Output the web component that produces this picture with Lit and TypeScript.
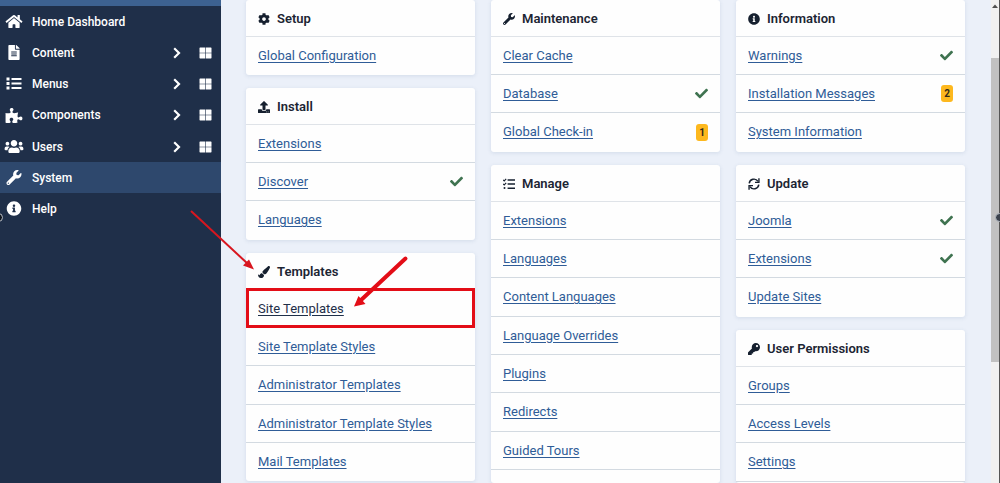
import { LitElement, html, svg, css, nothing } from "lit";
import { customElement, property } from "lit/decorators.js";
import { classMap } from "lit/directives/class-map.js";

const glyph = (d: string) => svg`<path fill="currentColor" d=${d}/>`;

const WRENCH = "M507.73 109.1c-2.24-9.03-13.54-12.09-20.12-5.51l-74.36 74.36-67.88-11.31-11.31-67.88 74.36-74.36c6.62-6.62 3.43-17.9-5.66-20.16-47.38-11.74-99.55.91-136.58 37.93-39.64 39.64-50.55 97.1-34.05 147.2L18.74 402.76c-24.99 24.99-24.99 65.51 0 90.5 24.99 24.99 65.51 24.99 90.5 0l213.21-213.21c50.12 16.71 107.47 5.68 147.37-34.22 37.07-37.07 49.7-89.32 37.91-136.73zM64 472c-13.25 0-24-10.75-24-24 0-13.26 10.75-24 24-24s24 10.74 24 24c0 13.25-10.75 24-24 24z";
const INFO = "M256 8C119.043 8 8 119.083 8 256c0 136.997 111.043 248 248 248s248-111.003 248-248C504 119.083 392.957 8 256 8zm0 110c23.196 0 42 18.804 42 42s-18.804 42-42 42-42-18.804-42-42 18.804-42 42-42zm56 254c0 6.627-5.373 12-12 12h-88c-6.627 0-12-5.373-12-12v-24c0-6.627 5.373-12 12-12h12v-64h-12c-6.627 0-12-5.373-12-12v-24c0-6.627 5.373-12 12-12h64c6.627 0 12 5.373 12 12v100h12c6.627 0 12 5.373 12 12v24z";

const ICONS: Record<string, { box: string; shape: unknown }> = {
  home: { box: "0 0 576 512", shape: glyph("M280.37 148.26L96 300.11V464a16 16 0 0 0 16 16l112.06-.29a16 16 0 0 0 15.92-16V368a16 16 0 0 1 16-16h64a16 16 0 0 1 16 16v95.64a16 16 0 0 0 16 16.05L464 480a16 16 0 0 0 16-16V300L295.67 148.26a12.19 12.19 0 0 0-15.3 0zM571.6 251.47L488 182.56V44.05a12 12 0 0 0-12-12h-56a12 12 0 0 0-12 12v72.61L318.47 43a48 48 0 0 0-61 0L4.34 251.47a12 12 0 0 0-1.6 16.9l25.5 31A12 12 0 0 0 45.15 301l235.22-193.74a12.19 12.19 0 0 1 15.3 0L530.9 301a12 12 0 0 0 16.9-1.6l25.5-31a12 12 0 0 0-1.7-16.93z") },
  file: { box: "0 0 384 512", shape: glyph("M224 136V0H24C10.7 0 0 10.7 0 24v464c0 13.3 10.7 24 24 24h336c13.3 0 24-10.7 24-24V160H248c-13.2 0-24-10.8-24-24zm64 236c0 6.6-5.4 12-12 12H108c-6.6 0-12-5.4-12-12v-8c0-6.6 5.4-12 12-12h168c6.6 0 12 5.4 12 12v8zm0-64c0 6.6-5.4 12-12 12H108c-6.6 0-12-5.4-12-12v-8c0-6.6 5.4-12 12-12h168c6.6 0 12 5.4 12 12v8zm0-72v8c0 6.6-5.4 12-12 12H108c-6.6 0-12-5.4-12-12v-8c0-6.6 5.4-12 12-12h168c6.6 0 12 5.4 12 12zm96-114.1v6.1H256V0h6.1c6.4 0 12.5 2.5 17 7l97.9 98c4.5 4.5 7 10.6 7 16.9z") },
  list: { box: "-2.5 -1 20 15", shape: glyph("M0 .5h3v3H0zM0 5h3v3H0zM0 9.5h3v3H0zM5 1h10v2H5zM5 5.5h10v2H5zM5 10h10v2H5z") },
  puzzle: { box: "0 0 576 512", shape: glyph("M519.442 288.651c-41.519 0-59.5 31.593-82.058 31.593C377.409 320.244 432 144 432 144s-196.288 80-196.288-3.297c0-35.827 36.288-46.25 36.288-85.985C272 19.216 243.885 0 210.539 0c-34.654 0-66.366 18.891-66.366 56.346 0 41.364 31.711 59.277 31.711 81.75C175.885 207.719 0 166.758 0 166.758v333.237s178.635 41.047 178.635-28.662c0-22.473-40-40.107-40-81.471 0-37.456 29.25-56.346 63.577-56.346 33.673 0 61.788 19.216 61.788 54.717 0 39.735-36.288 50.158-36.288 85.985 0 60.803 129.675 25.73 181.23 25.73 0 0-34.725-120.101 25.827-120.101 35.962 0 46.423 36.152 86.308 36.152C556.712 416 576 387.99 576 354.443c0-34.199-18.962-65.792-56.558-65.792z") },
  users: { box: "0 0 640 512", shape: glyph("M96 224c35.3 0 64-28.7 64-64s-28.7-64-64-64-64 28.7-64 64 28.7 64 64 64zm448 0c35.3 0 64-28.7 64-64s-28.7-64-64-64-64 28.7-64 64 28.7 64 64 64zm32 32h-64c-17.6 0-33.5 7.1-45.1 18.6 40.3 22.1 68.9 62 75.1 109.4h66c17.7 0 32-14.3 32-32v-32c0-35.3-28.7-64-64-64zm-256 0c61.9 0 112-50.1 112-112S381.9 32 320 32 208 82.1 208 144s50.1 112 112 112zm76.8 32h-8.3c-20.8 10-43.9 16-68.5 16s-47.6-6-68.5-16h-8.3C179.6 288 128 339.6 128 403.2V432c0 26.5 21.5 48 48 48h288c26.5 0 48-21.5 48-48v-28.8c0-63.6-51.6-115.2-115.2-115.2zm-223.7-13.4C161.5 263.1 145.6 256 128 256H64c-35.3 0-64 28.7-64 64v32c0 17.7 14.3 32 32 32h65.9c6.3-47.4 34.9-87.3 75.2-109.4z") },
  wrench: { box: "0 0 512 512", shape: glyph(WRENCH) },
  info: { box: "0 0 512 512", shape: glyph(INFO) },
  cog: { box: "0 0 512 512", shape: glyph("M487.4 315.7l-42.6-24.6c4.3-23.2 4.3-47 0-70.2l42.6-24.6c4.9-2.8 7.1-8.6 5.5-14-11.1-35.6-30-67.8-54.7-94.6-3.8-4.1-10-5.1-14.8-2.3L380.8 110c-17.9-15.4-38.5-27.3-60.8-35.1V25.8c0-5.6-3.9-10.5-9.4-11.7-36.7-8.2-74.3-7.8-109.2 0-5.5 1.2-9.4 6.1-9.4 11.7V75c-22.2 7.9-42.8 19.8-60.8 35.1L88.7 85.5c-4.9-2.8-11-1.9-14.8 2.3-24.7 26.7-43.6 58.9-54.7 94.6-1.7 5.4.6 11.2 5.5 14L67.3 221c-4.3 23.2-4.3 47 0 70.2l-42.6 24.6c-4.9 2.8-7.1 8.6-5.5 14 11.1 35.6 30 67.8 54.7 94.6 3.8 4.1 10 5.1 14.8 2.3l42.6-24.6c17.9 15.4 38.5 27.3 60.8 35.1v49.2c0 5.6 3.9 10.5 9.4 11.7 36.7 8.2 74.3 7.8 109.2 0 5.5-1.2 9.4-6.1 9.4-11.7v-49.2c22.2-7.9 42.8-19.8 60.8-35.1l42.6 24.6c4.9 2.8 11 1.9 14.8-2.3 24.7-26.7 43.6-58.9 54.7-94.6 1.5-5.5-.7-11.3-5.6-14.1zM256 336c-44.1 0-80-35.9-80-80s35.9-80 80-80 80 35.9 80 80-35.9 80-80 80z") },
  upload: { box: "0 0 512 512", shape: glyph("M296 384h-80c-13.3 0-24-10.7-24-24V192h-87.7c-17.8 0-26.7-21.5-14.1-34.1L242.3 5.7c7.5-7.5 19.8-7.5 27.3 0l152.2 152.2c12.6 12.6 3.7 34.1-14.1 34.1H320v168c0 13.3-10.7 24-24 24zm216-8v112c0 13.3-10.7 24-24 24H24c-13.3 0-24-10.7-24-24V376c0-13.3 10.7-24 24-24h136v8c0 30.9 25.1 56 56 56h80c30.9 0 56-25.1 56-56v-8h136c13.3 0 24 10.7 24 24zm-124 88c0-11-9-20-20-20s-20 9-20 20 9 20 20 20 20-9 20-20zm64 0c0-11-9-20-20-20s-20 9-20 20 9 20 20 20 20-9 20-20z") },
  brush: { box: "0 0 512 512", shape: glyph("M167.02 309.34c-40.12 2.58-76.53 17.86-97.19 72.3-2.35 6.21-8 9.98-14.59 9.98-11.11 0-45.46-27.67-55.25-34.35C0 439.62 37.93 512 128 512c75.86 0 128-43.77 128-120.19 0-3.11-.65-6.08-.97-9.13l-88.01-73.34zM457.89 0c-15.16 0-29.37 6.71-40.21 16.45C213.27 199.05 192 203.34 192 257.09c0 13.7 3.25 26.76 8.73 38.7l63.82 53.18c7.21 1.8 14.64 3.03 22.39 3.03 62.11 0 98.11-45.47 211.16-256.46 7.38-14.35 13.9-29.85 13.9-45.99C512 20.64 486 0 457.89 0z") },
  key: { box: "0 0 512 512", shape: glyph("M512 176.001C512 273.203 433.202 352 336 352c-11.22 0-22.19-1.062-32.827-3.069l-24.012 27.014A23.999 23.999 0 0 1 261.223 384H224v40c0 13.255-10.745 24-24 24h-40v40c0 13.255-10.745 24-24 24H24c-13.255 0-24-10.745-24-24v-78.059c0-6.365 2.529-12.47 7.029-16.971l161.802-161.802C163.108 213.814 160 195.271 160 176 160 78.798 238.797.001 335.999 0 433.488-.001 512 78.511 512 176.001zM336 128c0 26.51 21.49 48 48 48s48-21.49 48-48-21.49-48-48-48-48 21.49-48 48z") },
  tasks: {
    box: "0 0 12 12",
    shape: svg`<path fill="none" stroke="currentColor" stroke-width="1.1" d="M.2 1.9l1 1L3.2.8M.2 5.9l1 1L3.2 4.8"/><path fill="currentColor" d="M4.6 1.2H12v1.5H4.6zM4.6 5.3H12v1.5H4.6zM4.6 9.4H12v1.5H4.6z"/><circle cx="1.5" cy="10.1" r="1" fill="currentColor"/>`,
  },
  sync: {
    box: "0 0 13 13",
    shape: svg`<path fill="none" stroke="currentColor" stroke-width="1.6" d="M1.3 5.8A5.2 5.2 0 0 1 10.8 3.6M11.7 7.2A5.2 5.2 0 0 1 2.2 9.4"/><path fill="currentColor" d="M12.6.3v5.2H7.6V4.1h3.5V.3zM.4 12.7V7.5h5v1.4H1.9v3.8z"/>`,
  },
  check: { box: "0 0 512 512", shape: glyph("M173.898 439.404l-166.4-166.4c-9.997-9.997-9.997-26.206 0-36.204l36.203-36.204c9.997-9.998 26.207-9.998 36.204 0L192 312.69 432.095 72.596c9.997-9.997 26.207-9.997 36.204 0l36.203 36.204c9.997 9.997 9.997 26.206 0 36.204l-294.4 294.401c-9.998 9.997-26.207 9.997-36.204-.001z") },
  chevron: { box: "0 0 8 12", shape: svg`<path fill="none" stroke="currentColor" stroke-width="2.2" d="M1.2 1.2L6 6l-4.8 4.8"/>` },
  grid: { box: "0 0 13 12", shape: glyph("M1 .5h5.200v5.200H.5V1zM6.800 .5H12l.5.5v4.700H6.800zM.5 6.300h5.700v5.200H1l-.5-.5zM6.800 6.300h5.700V11l-.5.5H6.800z") },
};

const icon = (name: string, cls: string) => html`
  <svg class=${cls} viewBox=${ICONS[name].box} aria-hidden="true">${ICONS[name].shape}</svg>`;

type Row = { label: string; ok?: boolean; count?: number; marked?: boolean };
type Panel = { title: string; icon: string; rows: Row[]; pointers?: boolean; open?: boolean };

const rows = (...labels: string[]): Row[] => labels.map((label) => ({ label }));

const COLUMNS: Panel[][] = [
  [
    { title: "Setup", icon: "cog", rows: rows("Global Configuration") },
    { title: "Install", icon: "upload", rows: [{ label: "Extensions" }, { label: "Discover", ok: true }, { label: "Languages" }] },
    {
      title: "Templates", icon: "brush", pointers: true,
      rows: [
        { label: "Site Templates", marked: true },
        ...rows("Site Template Styles", "Administrator Templates", "Administrator Template Styles", "Mail Templates"),
      ],
    },
  ],
  [
    { title: "Maintenance", icon: "wrench", rows: [{ label: "Clear Cache" }, { label: "Database", ok: true }, { label: "Global Check-in", count: 1 }] },
    {
      title: "Manage", icon: "tasks", open: true,
      rows: rows("Extensions", "Languages", "Content Languages", "Language Overrides", "Plugins", "Redirects", "Guided Tours"),
    },
  ],
  [
    { title: "Information", icon: "info", rows: [{ label: "Warnings", ok: true }, { label: "Installation Messages", count: 2 }, { label: "System Information" }] },
    { title: "Update", icon: "sync", rows: [{ label: "Joomla", ok: true }, { label: "Extensions", ok: true }, { label: "Update Sites" }] },
    { title: "User Permissions", icon: "key", open: true, rows: rows("Groups", "Access Levels", "Settings") },
  ],
];

const MENU = [
  { label: "Home Dashboard", icon: "home" },
  { label: "Content", icon: "file", sub: true },
  { label: "Menus", icon: "list", sub: true },
  { label: "Components", icon: "puzzle", sub: true },
  { label: "Users", icon: "users", sub: true },
  { label: "System", icon: "wrench", active: true },
  { label: "Help", icon: "info" },
];

@customElement("side-menu")
class SideMenu extends LitElement {
  static styles = css`
    :host {
      display: block;
      background: #1f2f49;
      color: #fff;
      border-top: 6px solid #3d6291;
      box-sizing: border-box;
      font-size: 12px;
      font-weight: 500;
    }
    .list { list-style: none; margin: 0; padding: 0; }
    .item { display: flex; align-items: center; height: 31px; padding-right: 9px; }
    .item:nth-child(4n) { height: 32px; }
    .active { background: #2e486d; }
    .link {
      flex: 1;
      display: flex;
      align-items: center;
      gap: 8px;
      padding-left: 4px;
      color: inherit;
      text-decoration: none;
    }
    .icon { width: 20px; height: 15px; }
    .arrow { width: 8px; height: 12px; margin-right: 18px; }
    .board { display: flex; color: inherit; }
    .grid { width: 13px; height: 12px; }
  `;

  render() {
    return html`
      <nav aria-label="Main menu">
        <ul class="list">
          ${MENU.map((m) => html`
            <li class=${classMap({ item: true, active: !!m.active })}>
              <a class="link" href="#">${icon(m.icon, "icon")}<span>${m.label}</span></a>
              ${m.sub ? html`${icon("chevron", "arrow")}
                <a class="board" href="#" aria-label="${m.label} dashboard">${icon("grid", "grid")}</a>` : nothing}
            </li>`)}
        </ul>
      </nav>`;
  }
}

@customElement("link-panel")
class LinkPanel extends LitElement {
  @property({ attribute: false }) panel!: Panel;

  static styles = css`
    :host {
      display: block;
      position: relative;
      background: #fefefe;
      border-radius: 3px;
      box-shadow: 0 1px 4px rgba(40, 70, 120, 0.12);
    }
    .title {
      display: flex;
      align-items: center;
      gap: 7px;
      height: 37px;
      box-sizing: border-box;
      margin: 0;
      padding: 2px 12px 0;
      border-bottom: 1px solid #dfe3e8;
      font-size: 13px;
      font-weight: 600;
      color: #1c2533;
    }
    .icon { width: 12px; height: 12px; color: #16202f; }
    .list { list-style: none; margin: 0; padding: 0; }
    .row {
      display: flex;
      align-items: center;
      justify-content: space-between;
      height: 38px;
      box-sizing: border-box;
      padding: 0 12px;
      border-bottom: 1px solid #d3dae1;
    }
    .row:nth-child(3n) { height: 39px; }
    .row:last-child { border-bottom-color: transparent; }
    .open .row:last-child { border-bottom-color: #d3dae1; }
    .link { color: #2f5c97; text-underline-offset: 2px; }
    .marked { position: relative; }
    .marked .link { color: #1f2f49; }
    .marked::after {
      content: "";
      position: absolute;
      inset: -2px 0 -1px;
      border: 3px solid #e30d17;
      pointer-events: none;
    }
    .ok { width: 13px; height: 13px; color: #3f7350; }
    .count {
      padding: 0 3px;
      border-radius: 3px;
      background: #fdb81e;
      color: #33291a;
      font-size: 10px;
      font-weight: 700;
      line-height: 17px;
    }
    .pointers {
      position: absolute;
      top: -2px;
      left: 0;
      width: 1px;
      height: 1px;
      overflow: visible;
      pointer-events: none;
      z-index: 1;
    }
  `;

  render() {
    const p = this.panel;
    return html`
      <section class=${classMap({ open: !!p.open })}>
        <h2 class="title">${icon(p.icon, "icon")}${p.title}</h2>
        <ul class="list">
          ${p.rows.map((r) => html`
            <li class=${classMap({ row: true, marked: !!r.marked })}>
              <a class="link" href="#">${r.label}</a>
              ${r.ok ? icon("check", "ok") : nothing}
              ${r.count ? html`<span class="count">${r.count}</span>` : nothing}
            </li>`)}
        </ul>
      </section>
      ${p.pointers ? html`
        <svg class="pointers" aria-hidden="true">
          <path d="M-55-40L2 13" stroke="#d8161f" stroke-width="2"/>
          <path d="M8 18.5L-3 14.500L3 8.500z" fill="#d8161f"/>
          <path d="M159.500 7.500L114 50" stroke="#e30d17" stroke-width="4" stroke-linecap="round"/>
          <path d="M108 55.500L112.500 45L119.500 53z" fill="#e30d17"/>
        </svg>` : nothing}`;
  }
}

@customElement("app-root")
class AppRoot extends LitElement {
  static styles = css`
    :host {
      display: grid;
      grid-template-columns: 221px 1fr 9px;
      height: 100vh;
      overflow: hidden;
      position: relative;
      background: #ebf0f9;
      font-family: Roboto, "Liberation Sans", sans-serif;
      font-size: 13px;
      font-weight: 400;
      line-height: 18px;
    }
    .board {
      display: grid;
      grid-template-columns: repeat(3, minmax(0, 1fr));
      gap: 16px;
      padding: 0 26px 0 25px;
      min-height: 0;
    }
    .column { display: flex; flex-direction: column; gap: 13px; min-height: 0; }
    .panel { flex: none; }
    .fill { flex: 1 0 auto; }
    .scroll {
      display: flex;
      flex-direction: column;
      align-items: center;
      background: #f1f1f1;
      border-right: 1px solid #555;
    }
    .up { width: 8px; height: 8px; margin-top: 2px; }
    .upper { flex: 12 0 0; display: flex; }
    .thumb { align-self: stretch; flex: 63 0 0; background: #c1c1c1; }
    .rest { flex: 25 0 0; }
    .grip {
      position: absolute;
      top: 44%;
      width: 7px;
      height: 7px;
      border: 1px solid #b9bec6;
      border-radius: 50%;
      background: #3b424d;
    }
    .start { left: -6px; background: #10161f; }
    .end { right: -4px; }
  `;

  render() {
    return html`
      <side-menu></side-menu>
      <main class="board">
        ${COLUMNS.map((column) => html`
          <div class="column">
            ${column.map((p) => html`
              <link-panel class=${p.open ? "fill" : "panel"} .panel=${p}></link-panel>`)}
          </div>`)}
      </main>
      <div class="scroll" aria-hidden="true">
        <div class="upper"><svg class="up" viewBox="0 0 8 8"><path d="M1 6L4 2.500L7 6z" fill="#505050"/></svg></div>
        <div class="thumb"></div>
        <div class="rest"></div>
      </div>
      <span class="grip start"></span>
      <span class="grip end"></span>`;
  }
}
